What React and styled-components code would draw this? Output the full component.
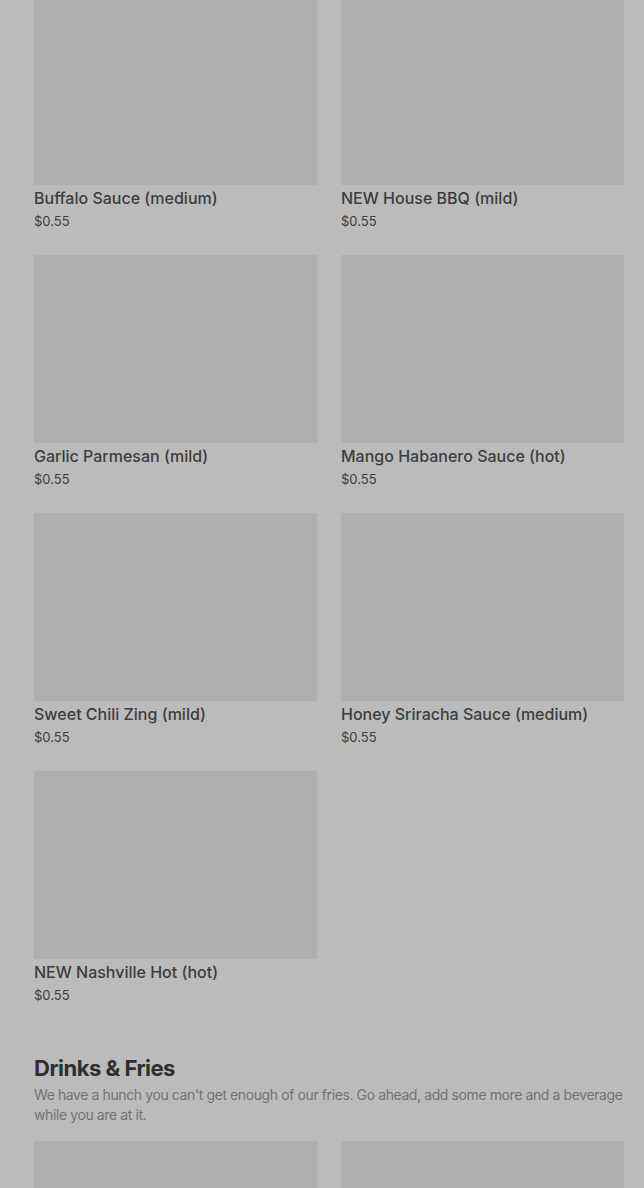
import React from "react";
import styled, { createGlobalStyle } from "styled-components";

const GlobalStyle = createGlobalStyle`
  html, body {
    margin: 0;
    padding: 0;
    background: #bbbbbb;
  }
  body {
    font-family: Inter, "Noto Sans", "Liberation Sans", sans-serif;
    -webkit-font-smoothing: antialiased;
  }
`;

const Page = styled.main`
  margin-top: -3px;
  padding: 0 20px 40px 34px;
`;

const Section = styled.section`
  & + & {
    margin-top: 48px;
  }
`;

const SectionTitle = styled.h2`
  margin: 0;
  font-size: 22px;
  line-height: 28px;
  font-weight: 700;
  letter-spacing: -0.5px;
  color: #2f2f2f;
`;

const SectionText = styled.p`
  margin: 3px 0 16px;
  font-size: 14px;
  line-height: 20px;
  color: #737373;
  letter-spacing: -0.4px;
`;

const Grid = styled.div`
  display: grid;
  grid-template-columns: 283px 283px;
  column-gap: 24px;
  row-gap: 23px;
`;

const Card = styled.article`
  display: flex;
  flex-direction: column;
`;

const Photo = styled.div`
  height: 188px;
  background: #afafaf;
`;

const Name = styled.h3`
  margin: 1px 0 0;
  font-size: 16px;
  line-height: 24px;
  font-weight: 500;
  color: #3d3d3d;
`;

const Price = styled.span`
  font-size: 13px;
  line-height: 22px;
  color: #3d3d3d;
`;

const sauces = [
  ["Buffalo Sauce (medium)", "$0.55"],
  ["NEW House BBQ (mild)", "$0.55"],
  ["Garlic Parmesan (mild)", "$0.55"],
  ["Mango Habanero Sauce (hot)", "$0.55"],
  ["Sweet Chili Zing (mild)", "$0.55"],
  ["Honey Sriracha Sauce (medium)", "$0.55"],
  ["NEW Nashville Hot (hot)", "$0.55"],
];

const drinks = [
  ["Regular Fries", "$2.99"],
  ["Large Fries", "$3.99"],
  ["Fountain Drink", "$2.49"],
  ["Bottled Water", "$1.99"],
];

function Item({ name, price }) {
  return (
    <Card>
      <Photo />
      <Name>{name}</Name>
      <Price>{price}</Price>
    </Card>
  );
}

export default function App() {
  return (
    <>
      <GlobalStyle />
      <Page>
        <Section>
          <Grid>
            {sauces.map(([n, p]) => (
              <Item key={n} name={n} price={p} />
            ))}
          </Grid>
        </Section>
        <Section>
          <SectionTitle>Drinks &amp; Fries</SectionTitle>
          <SectionText>
            We have a hunch you can't get enough of our fries. Go ahead, add some more and a beverage while you are at it.
          </SectionText>
          <Grid>
            {drinks.map(([n, p]) => (
              <Item key={n} name={n} price={p} />
            ))}
          </Grid>
        </Section>
      </Page>
    </>
  );
}
